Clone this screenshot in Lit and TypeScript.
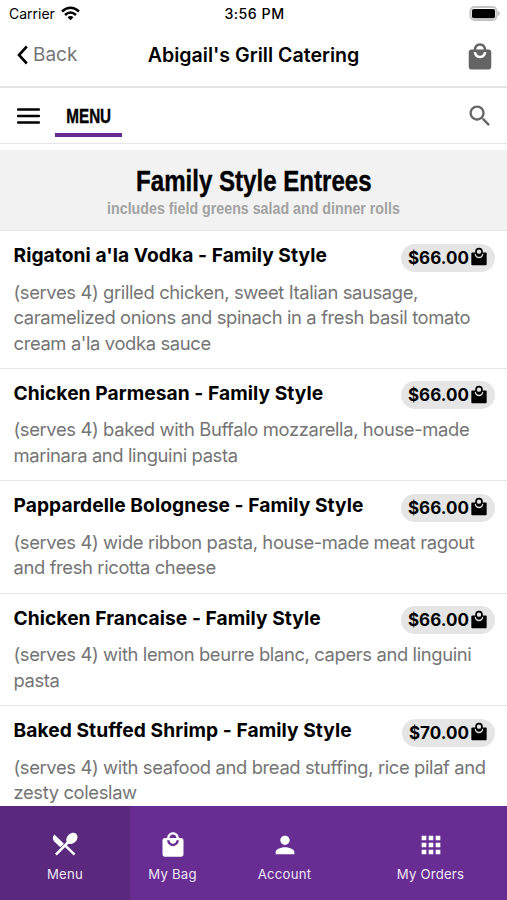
import { LitElement, html, css, svg } from "lit";
import { customElement, property } from "lit/decorators.js";

const BAG = "M19 6h-2c0-2.76-2.24-5-5-5S7 3.24 7 6H5c-1.1 0-2 .9-2 2v12c0 1.1.9 2 2 2h14c1.1 0 2-.9 2-2V8c0-1.100-.9-2-2-2zm-7-3c1.660 0 3 1.340 3 3H9c0-1.660 1.340-3 3-3zm0 10c-2.760 0-5-2.240-5-5h2c0 1.660 1.340 3 3 3s3-1.340 3-3h2c0 2.760-2.240 5-5 5z";

const ICONS: Record<string, unknown> = {
  bag: svg`<path d=${BAG} />`,
  smallbag: svg`<path d="M4 6.500h16q1.200 0 1.200 1.200v13.100q0 1.200-1.200 1.200H4q-1.200 0-1.200-1.200V7.700Q2.800 6.500 4 6.500z" /><path d="M7.600 8.200a4.400 4.400 0 0 0 8.800 0" fill="none" stroke="#e5e5e5" stroke-width="1.600" /><circle cx="12" cy="5.600" r="3.600" fill="#e5e5e5" stroke="currentColor" stroke-width="2" />`,
  menu: svg`<path d="M2.900 2.900Q.4 5.800 2.600 8.700L8 14l3.100-3.100z" /><ellipse cx="17.900" cy="6.300" rx="5.400" ry="4.200" transform="rotate(-45 17.900 6.300)" /><path d="M15.500 8.800L4.200 20.300M12.500 12.800l7.700 7.500" fill="none" stroke="currentColor" stroke-width="2.200" />`,
  person: svg`<path d="M12 12c2.210 0 4-1.790 4-4s-1.790-4-4-4-4 1.790-4 4 1.790 4 4 4zm0 2c-2.670 0-8 1.340-8 4v2h16v-2c0-2.660-5.330-4-8-4z" />`,
  grid: svg`<path d="M4 8h4V4H4v4zm6 12h4v-4h-4v4zm-6 0h4v-4H4v4zm0-6h4v-4H4v4zm6 0h4v-4h-4v4zm6-10v4h4V4h-4zm-6 4h4V4h-4v4zm6 6h4v-4h-4v4zm0 6h4v-4h-4v4z" />`,
  search: svg`<path d="M15.500 14h-.79l-.28-.27C15.410 12.590 16 11.110 16 9.500 16 5.910 13.090 3 9.500 3S3 5.910 3 9.500 5.910 16 9.500 16c1.610 0 3.090-.59 4.230-1.570l.27.28v.79l5 4.990L20.490 19l-4.990-5zm-6 0C7.010 14 5 11.990 5 9.500S7.010 5 9.500 5 14 7.010 14 9.500 11.990 14 9.500 14z" />`,
};

interface Dish {
  name: string;
  price: string;
  lines: string[];
}

const DISHES: Dish[] = [
  { name: "Rigatoni a'la Vodka - Family Style", price: "$66.00", lines: ["(serves 4) grilled chicken, sweet Italian sausage,", "caramelized onions and spinach in a fresh basil tomato", "cream a'la vodka sauce"] },
  { name: "Chicken Parmesan - Family Style", price: "$66.00", lines: ["(serves 4) baked with Buffalo mozzarella, house-made", "marinara and linguini pasta"] },
  { name: "Pappardelle Bolognese - Family Style", price: "$66.00", lines: ["(serves 4) wide ribbon pasta, house-made meat ragout", "and fresh ricotta cheese"] },
  { name: "Chicken Francaise - Family Style", price: "$66.00", lines: ["(serves 4) with lemon beurre blanc, capers and linguini", "pasta"] },
  { name: "Baked Stuffed Shrimp - Family Style", price: "$70.00", lines: ["(serves 4) with seafood and bread stuffing, rice pilaf and", "zesty coleslaw"] },
];

@customElement("ui-icon")
class UiIcon extends LitElement {
  @property() name = "bag";
  static styles = css`
    :host { display: block; flex: none; width: 28px; height: 28px; }
    svg { display: block; width: 100%; height: 100%; fill: currentColor; }
  `;
  render() {
    return html`<svg viewBox="0 0 24 24">${ICONS[this.name]}</svg>`;
  }
}

@customElement("dish-row")
class DishRow extends LitElement {
  @property({ attribute: false }) dish!: Dish;
  static styles = css`
    :host { display: block; box-sizing: border-box; padding: 12px 12px 11.900px 13.500px; border-bottom: 1px solid #e6e6e6; }
    .top { display: flex; justify-content: space-between; align-items: flex-start; height: 36.500px; }
    .name { font-size: 19.200px; font-weight: 650; line-height: 25px; letter-spacing: .06px; color: #000; white-space: nowrap; }
    .price { display: flex; align-items: center; box-sizing: border-box; height: 28px; margin-top: .5px; padding: 0 6px 0 6.500px; border-radius: 14px; background: #e5e5e5; font-size: 17px; font-weight: 680; letter-spacing: .05px; color: #000; }
    .price ui-icon { width: 20px; height: 20px; margin-top: -1px; }
    .line { font-size: 18.400px; line-height: 25.500px; letter-spacing: -.37px; color: #757575; white-space: nowrap; }
  `;
  render() {
    return html`
      <div class="top">
        <div class="name">${this.dish.name}</div>
        <div class="price"><span>${this.dish.price}</span><ui-icon name="smallbag"></ui-icon></div>
      </div>
      ${this.dish.lines.map((l) => html`<div class="line">${l}</div>`)}
    `;
  }
}

@customElement("app-root")
class AppRoot extends LitElement {
  static styles = css`
    :host { display: flex; flex-direction: column; height: 900px; overflow: hidden; background: #fff; color: #000; font-family: Inter, "Liberation Sans", sans-serif; }
    .status, .head { display: grid; grid-template-columns: 1fr auto 1fr; align-items: center; flex: none; }
    .status { height: 27px; padding: 0 7px 0 9px; font-size: 14px; }
    .carrier { display: flex; align-items: center; gap: 6px; }
    .time { font-weight: 500; font-size: 14.200px; letter-spacing: .5px; }
    .wifi { width: 19px; height: 15px; margin-top: -1px; }
    .battery { width: 31px; height: 15px; justify-self: end; margin-top: -1px; }
    .head { height: 59px; padding: 0 12px; border-bottom: 2px solid #e4e4e4; box-sizing: content-box; }
    .back { display: flex; align-items: center; gap: 4px; margin: -4px 0 0 4px; font-size: 19px; color: #757575; }
    .chev { width: 13px; height: 20px; }
    .title { margin-top: -4px; font-size: 19.600px; font-weight: 620; }
    .head ui-icon { justify-self: end; width: 30px; height: 30px; color: #646464; }
    .tabs { flex: none; display: flex; height: 55px; padding: 0 13px 0 17px; border-bottom: 1px solid #e6e6e9; align-items: center; }
    .burger { width: 23px; height: 16px; }
    .tab { display: flex; align-items: center; justify-content: center; box-sizing: border-box; width: 67px; height: 38px; margin: 5px 0 0 15px; padding: 1px 0 0 1px; border-bottom: 4px solid #632c92; }
    .narrow { font-family: "Liberation Sans", sans-serif; font-weight: 700; white-space: nowrap; }
    .tab .narrow { font-size: 19.500px; transform: scaleX(.78); -webkit-text-stroke: .4px #000; }
    .tabs ui-icon { margin-left: auto; color: #666; }
    .section { flex: none; display: flex; flex-direction: column; align-items: center; box-sizing: border-box; height: 81px; margin-top: 6px; padding-top: 14px; background: #f2f2f2; border-bottom: 1px solid #e8e8e8; }
    .section .big { font-size: 29px; line-height: 34px; transform: scaleX(.83); -webkit-text-stroke: .4px #000; }
    .section .sub { font-size: 16px; line-height: 21px; color: #a2a2a2; transform: scaleX(.89); }
    .list { flex: 1; min-height: 0; overflow: hidden; }
    .nav { flex: none; display: grid; grid-template-columns: 130px 85px 139px 153px; height: 94px; background: #672d93; color: #fff; }
    .item { display: flex; flex-direction: column; align-items: center; padding-top: 25px; gap: 5px; font-size: 13.200px; line-height: 20px; letter-spacing: .2px; }
    .item span { color: #f0e6f6; }
    .item.on { background: #5a287d; }
  `;
  render() {
    return html`
      <div class="status">
        <div class="carrier"><span>Carrier</span>
          <svg class="wifi" viewBox="0 0 19 15"><g fill="none" stroke="#000" stroke-width="2.500"><path d="M1 5.500Q9.500-2 18 5.500" /><path d="M4 9Q9.500 4 15 9" /></g><path d="M6.500 11.200Q9.500 8.600 12.500 11.200L9.500 14.200Z" /></svg>
        </div>
        <div class="time">3:56 PM</div>
        <svg class="battery" viewBox="0 0 31 15"><rect x="1.500" y="1" width="26" height="13" rx="4" fill="#fff" stroke="#c4c4c4" stroke-width="2" /><rect x="3" y="3" width="23" height="9.200" rx="1.800" /><path d="M28.800 5v5q2-.8 2-2.500t-2-2.500z" fill="#bdbdbd" /></svg>
      </div>
      <div class="head">
        <div class="back"><svg class="chev" viewBox="0 0 13 20"><path d="M10.800 1.500L3 10l7.800 8.500" fill="none" stroke="#000" stroke-width="2.600" /></svg><span>Back</span></div>
        <div class="title">Abigail's Grill Catering</div>
        <ui-icon name="bag"></ui-icon>
      </div>
      <div class="tabs">
        <svg class="burger" viewBox="0 0 23 16"><path d="M1 1.500h21M1 8h21M1 14.500h21" stroke="#000" stroke-width="2.300" stroke-linecap="round" /></svg>
        <div class="tab"><span class="narrow">MENU</span></div>
        <ui-icon name="search"></ui-icon>
      </div>
      <div class="section"><div class="narrow big">Family Style Entrees</div><div class="narrow sub">includes field greens salad and dinner rolls</div></div>
      <div class="list">${DISHES.map((d) => html`<dish-row .dish=${d}></dish-row>`)}</div>
      <div class="nav">
        <div class="item on"><ui-icon name="menu"></ui-icon><span>Menu</span></div>
        <div class="item"><ui-icon name="bag"></ui-icon><span>My Bag</span></div>
        <div class="item"><ui-icon name="person"></ui-icon><span>Account</span></div>
        <div class="item"><ui-icon name="grid"></ui-icon><span>My Orders</span></div>
      </div>
    `;
  }
}
